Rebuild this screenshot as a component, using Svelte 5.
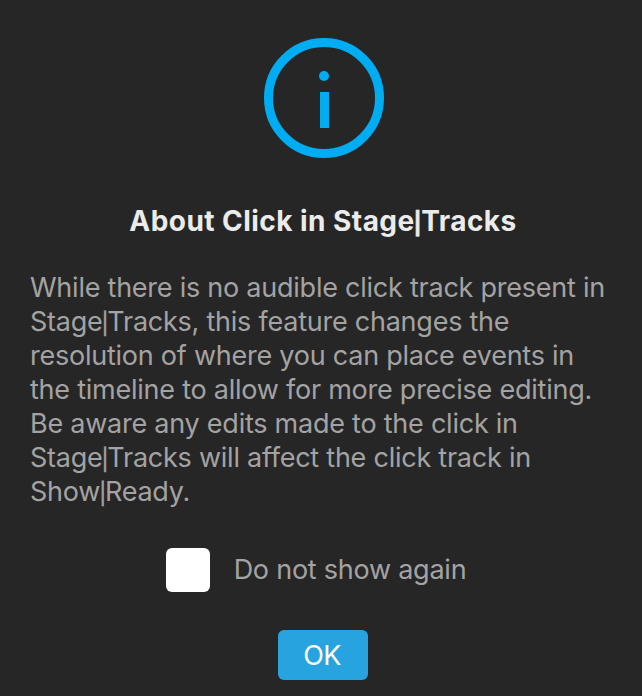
<script lang="ts">
  // Info dialog with a "do not show again" opt-out.
  let hidePrompt = $state(false);
  let open = $state(true);

  const title = "About Click in Stage|Tracks";
  const lines = [
    "While there is no audible click track present in",
    "Stage|Tracks, this feature changes the",
    "resolution of where you can place events in",
    "the timeline to allow for more precise editing.",
    "Be aware any edits made to the click in",
    "Stage|Tracks will affect the click track in",
    "Show|Ready.",
  ];
</script>

<!-- product names carry a bar, set smaller and tighter than the text around it -->
{#snippet barred(text: string)}
  {#each text.split("|") as part, i}{#if i > 0}<span class="bar">|</span>{/if}{part}{/each}
{/snippet}

{#if open}
  <div class="dialog" role="dialog" aria-label={title}>
    <svg class="icon" width="120" height="120" viewBox="0 0 120 120" aria-hidden="true">
      <circle cx="60" cy="60" r="55.5" fill="none" stroke="#00adf2" stroke-width="9" />
      <circle cx="60" cy="38" r="5" fill="#00adf2" />
      <rect x="56" y="54" width="9" height="36" fill="#00adf2" />
    </svg>

    <h1>{@render barred(title)}</h1>

    <div class="text">
      {#each lines as line}
        <div class="line">{@render barred(line)}</div>
      {/each}
    </div>

    <label>
      <input type="checkbox" bind:checked={hidePrompt} />
      <span>Do not show again</span>
    </label>

    <button onclick={() => (open = false)}>OK</button>
  </div>
{/if}

<style>
  :global(body) {
    margin: 0;
    background: #262626;
  }
  .dialog {
    box-sizing: border-box;
    height: 696px;
    padding: 38px 30px 0;
    display: flex;
    flex-direction: column;
    align-items: center;
    overflow: hidden;
    background: #262626;
    color: #a3a3a3;
    font-family: Inter, sans-serif;
    font-size: 27px;
    line-height: 34px;
    letter-spacing: -0.24px;
  }
  .icon {
    display: block;
    flex: none;
    margin-left: 6px;
  }
  h1 {
    margin: 46px 0 0 4px;
    color: #ebebeb;
    font-size: 28px;
    font-weight: 700;
    line-height: 34px;
    letter-spacing: 0.45px;
    white-space: nowrap;
  }
  .text {
    align-self: stretch;
    margin: 33px 0 0;
  }
  .line {
    height: 34px;
    white-space: nowrap;
  }
  .bar {
    margin: 0 -1px;
    font-size: 0.78em;
    line-height: 1;
    -webkit-text-stroke: 0.5px;
  }
  label {
    display: flex;
    align-items: center;
    gap: 24px;
    margin: 39px 10px 0 0;
    white-space: nowrap;
  }
  input {
    appearance: none;
    width: 44px;
    height: 44px;
    margin: 0;
    border-radius: 6px;
    background: #fff;
  }
  input:checked {
    background: #27a4df;
    box-shadow: inset 0 0 0 6px #fff;
  }
  button {
    width: 90px;
    height: 50px;
    margin: 38px 0 0 4px;
    padding: 2px 2px 0 0;
    border: 0;
    border-radius: 6px;
    background: #27a4df;
    color: #fff;
    font: inherit;
    letter-spacing: -0.6px;
  }
</style>
